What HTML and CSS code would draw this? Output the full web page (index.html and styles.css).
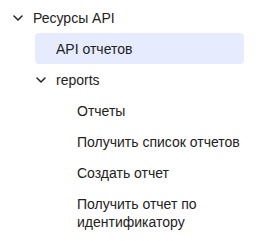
FILE: index.html
```html
<!DOCTYPE html>
<html lang="ru">
<head>
<meta charset="utf-8">
<link rel="stylesheet" href="styles.css">
</head>
<body>
<nav class="sidebar">
  <ul class="tree">
    <li>
      <div class="row">
        <span class="slot"><svg class="chev" viewBox="0 0 10 6" width="10" height="6"><path d="M1 1l4 4 4-4" fill="none" stroke="currentColor" stroke-width="1.5" stroke-linecap="round" stroke-linejoin="round"/></svg></span>
        <span class="label">Ресурсы API</span>
      </div>
      <ul class="children">
        <li><div class="row active"><span class="slot"></span><span class="label">API отчетов</span></div></li>
        <li>
          <div class="row">
            <span class="slot"><svg class="chev" viewBox="0 0 10 6" width="10" height="6"><path d="M1 1l4 4 4-4" fill="none" stroke="currentColor" stroke-width="1.5" stroke-linecap="round" stroke-linejoin="round"/></svg></span>
            <span class="label">reports</span>
          </div>
          <ul class="children">
            <li><div class="row"><span class="slot"></span><span class="label">Отчеты</span></div></li>
            <li><div class="row"><span class="slot"></span><span class="label">Получить список отчетов</span></div></li>
            <li><div class="row"><span class="slot"></span><span class="label">Создать отчет</span></div></li>
            <li><div class="row"><span class="slot"></span><span class="label">Получить отчет по идентификатору</span></div></li>
          </ul>
        </li>
      </ul>
    </li>
  </ul>
</nav>
</body>
</html>
```
FILE: styles.css
```css
html, body {
  margin: 0;
  padding: 0;
  background: #ffffff;
}
body {
  font-family: "Liberation Sans", Arial, sans-serif;
  font-size: 14px;
  color: #222222;
  width: 262px;
}
.sidebar {
  padding: 2px 18px 0 12px;
}
.tree, .children {
  list-style: none;
  margin: 0;
  padding: 0;
}
.children {
  padding-left: 23px;
}
.children .children {
  padding-left: 21px;
}
.row {
  display: flex;
  align-items: flex-start;
  padding: 6.5px 0 6.5px 0;
  line-height: 18px;
  border-radius: 4px;
}
.row.active {
  background: #e6ecfd;
}
.slot {
  flex: 0 0 21px;
  height: 18px;
  display: flex;
  align-items: center;
  padding-left: 1px;
  box-sizing: border-box;
}
.chev {
  color: #222222;
  display: block;
}
.label {
  flex: 1 1 auto;
}
```
